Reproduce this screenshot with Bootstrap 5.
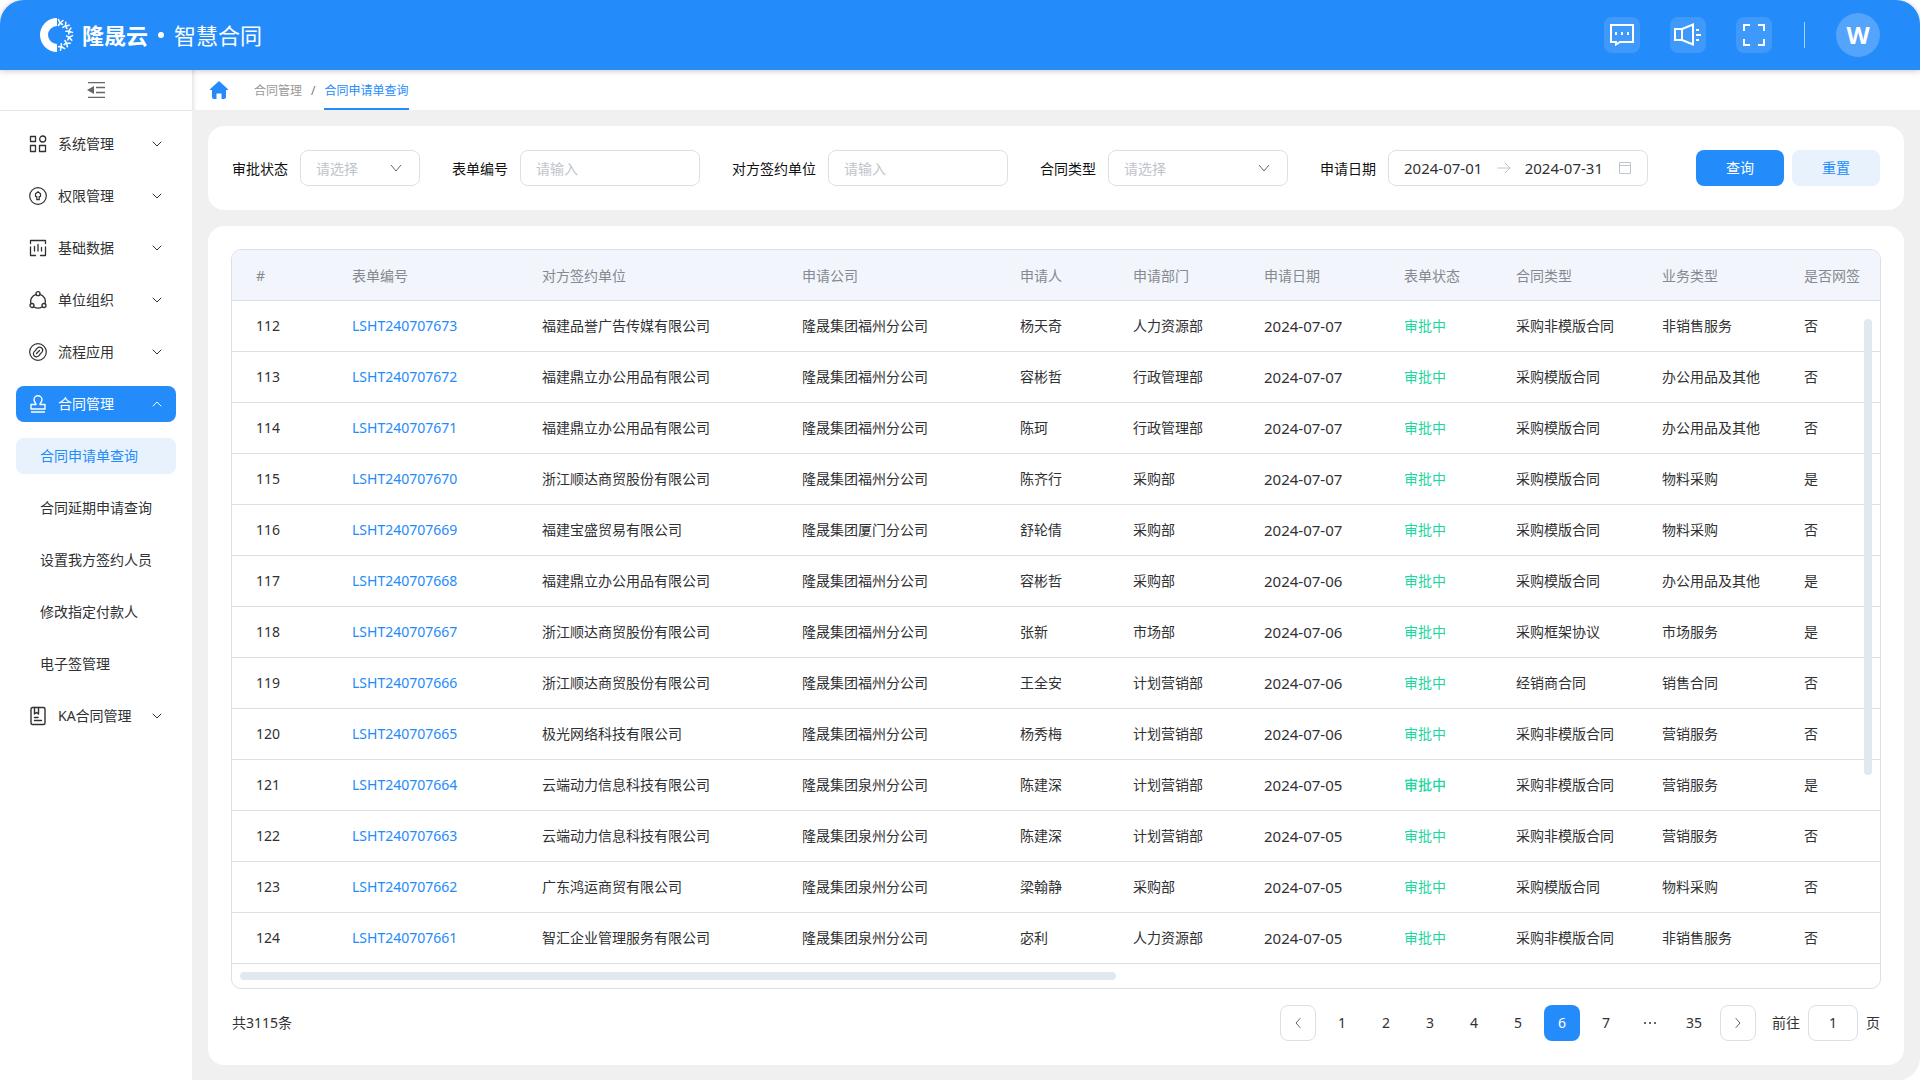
<!DOCTYPE html>
<html lang="zh-CN">
<head>
<meta charset="utf-8">
<meta name="viewport" content="width=device-width, initial-scale=1">
<title>隆晟云 · 智慧合同</title>
<link rel="stylesheet" href="https://cdn.jsdelivr.net/npm/bootstrap@5.3.0/dist/css/bootstrap.min.css">
<style>
:root{--brand:#248bfb;--brand-soft:#e8f2fd;--line:#dcdfe6;--ink:#303133;--hint:#c0c4cc}
body{font-family:"Noto Sans","Noto Sans CJK SC",sans-serif;font-size:14px;line-height:20px;color:var(--ink);background:#fff}
a{text-decoration:none}
svg{display:block;flex:none}
.ln{fill:none;stroke:currentColor;stroke-linecap:round;stroke-linejoin:round}
.topbar{height:70px;background:var(--brand);border-radius:24px 24px 0 0;padding:0 40px;color:#fff;box-shadow:0 1px 6px rgba(0,0,0,.22);z-index:3}
.brand-name{font-size:22px;line-height:32px;font-family:"Noto Sans CJK SC",sans-serif}
.brand-text{padding-bottom:2px}
.brand-dot{width:6px;height:6px;border-radius:50%;background:#fff;margin:0 10px}
.tools{gap:30px}
.tool-btn{width:36px;height:36px;border:0;border-radius:8px;background:rgba(255,255,255,.12);color:#fff;padding:0}
.tool-split{width:1px;height:26px;background:rgba(255,255,255,.6);margin:0 1px 0 2px}
.user-dot{width:44px;height:44px;border:0;border-radius:50%;background:rgba(255,255,255,.22);color:#fff;font:bold 24px/44px "Noto Sans",sans-serif;padding:0}
.side{width:192px;background:#fff}
.side-fold{height:41px;border:0;border-bottom:1px solid #e8e8e8;background:#fff;color:#666}
.menu{padding:15px 16px;gap:16px}
.menu-item{height:36px;border-radius:8px;padding:0 13px 0 12px;gap:10px;color:var(--ink)}
.menu-item.on{background:var(--brand);color:#fff}
.menu-sub{height:36px;border-radius:8px;padding-left:24px;color:var(--ink)}
.menu-sub.on{background:var(--brand-soft);color:var(--brand)}
.work{background:#f0f0f0;border-bottom-right-radius:24px;min-width:0}
.crumbs{height:40px;background:#fff;padding:0 17px;font-size:12px;line-height:42px;color:#999;box-shadow:inset 5px 0 5px -4px rgba(0,0,0,.14)}
.crumbs ol{margin:0 0 0 25px}
.crumbs li{height:40px}
.crumbs a{color:#999}
.crumbs .slash{margin:0 9px;color:#777}
.crumbs .here{color:var(--brand);border-bottom:2px solid var(--brand)}
.panel{background:#fff;border-radius:16px;padding:24px}
.filters{row-gap:12px;column-gap:32px}
.filters label{color:#111;margin-right:12px;padding-top:2px}
.box,.box:focus{height:36px;border:1px solid var(--line);border-radius:8px;font-size:14px;line-height:20px;padding:7px 15px;color:var(--ink);background-color:#fff}
.box::placeholder{color:var(--hint)}
.pick,.pick:focus{padding:8px 15px 6px;color:var(--hint);background-image:url("data:image/svg+xml,%3Csvg xmlns='http://www.w3.org/2000/svg' viewBox='0 0 12 12'%3E%3Cpath d='M1 3l5 6 5-6' fill='none' stroke='%23666'/%3E%3C/svg%3E");background-size:12px 12px;background-position:right 17px center}
.w-s{width:120px}.w-m{width:180px}.w-l{width:260px}
.date-in{width:80px;border:0;padding:0;font-size:15px;line-height:20px;color:var(--ink);outline:0}
.act{width:88px;height:36px;border:0;border-radius:8px;font-size:14px;line-height:20px;padding:0}
.act-go{background:var(--brand);color:#fff}
.act-re{background:var(--brand-soft);color:var(--brand)}
.list{margin:-1px -1px 0;border:1px solid var(--line);border-radius:10px;position:relative;overflow:hidden}
.grid{width:100%;min-width:1640px;table-layout:fixed;margin:0}
.grid th,.grid td{height:51px;padding:0 0 0 24px;border-bottom:1px solid var(--line);font-weight:400;white-space:nowrap}
.grid th{height:50px;padding-top:2px;background:#f2f6fc;color:#86898f}
.grid td a{color:var(--brand)}
.grid td:nth-child(8){color:#1ed6a0}
.grid td.strong{font-weight:500}
.grid .day{font-size:15px}
.bar-y{position:absolute;right:8px;top:69px;width:8px;height:456px;border-radius:4px;background:#e0e8f0}
.bar-x{width:876px;height:8px;border-radius:4px;background:#e0e8f0;margin:8px}
.foot{margin-top:16px}
.pager{gap:8px;margin:0}
.pager .page-link{width:36px;height:36px;border:0;border-radius:8px;padding:0;background:none;color:var(--ink);display:flex;align-items:center;justify-content:center;font-size:14px}
.pager .page-item:not(:first-child) .page-link{margin:0}
.pager .page-item .page-link{border-radius:8px}
.pager .edge .page-link{border:1px solid var(--line);color:#606266}
.pager .active .page-link{background:var(--brand);color:#fff}
.jump{gap:8px;margin-left:16px}
.jump input{width:50px;padding:0;text-align:center}
</style>
</head>
<body class="d-flex flex-column min-vh-100">
<header class="topbar d-flex align-items-center position-relative">
  <a href="#" class="d-flex align-items-center text-white brand-name">
    <svg class="me-2" width="34" height="34" viewBox="0 0 34 34"><path d="M17 0A17 17 0 0 0 17 34V26A9 9 0 0 1 17 8Z" fill="#fff"/><g class="ln" stroke-width="1.500"><g id="tick"><path d="M18.500 7.500l1.500-2.500 2.500 1.500M20 5l-1.500-3.500M20 5l3-2.500"/></g><use href="#tick" transform="rotate(29 17 17)"/><use href="#tick" transform="rotate(58 17 17)"/><use href="#tick" transform="rotate(87 17 17)"/><use href="#tick" transform="rotate(116 17 17)"/><use href="#tick" transform="rotate(145 17 17)"/></g></svg>
    <strong class="brand-text fw-bold">隆晟云</strong><span class="brand-dot"></span><span class="brand-text">智慧合同</span>
  </a>
  <div class="tools d-flex align-items-center ms-auto">
    <button class="tool-btn d-flex align-items-center justify-content-center" type="button" aria-label="消息"><svg width="24" height="22" viewBox="0 0 24 22"><path d="M1 1h22v17H10l-4 2.500V18H1z" fill="none" stroke="#fff" stroke-width="2"/><path d="M5 8h2v3H5zM11 8h2v3h-2zM17 8h2v3h-2z" fill="#fff"/></svg></button>
    <button class="tool-btn d-flex align-items-center justify-content-center" type="button" aria-label="公告"><svg width="28" height="24" viewBox="0 0 28 24"><path d="M1 6h7v11H1zM8 6l11-4.500v20L8 17M22 7h3M22 12h5M22 17h3" fill="none" stroke="#fff" stroke-width="2"/></svg></button>
    <button class="tool-btn d-flex align-items-center justify-content-center" type="button" aria-label="全屏"><svg width="24" height="24" viewBox="0 0 24 24"><path d="M2 8V2h6M16 2h6v6M22 16v6h-6M8 22H2v-6" fill="none" stroke="#fff" stroke-width="2"/></svg></button>
    <span class="tool-split"></span>
    <button class="user-dot" type="button">W</button>
  </div>
</header>
<div class="d-flex flex-grow-1">
  <aside class="side d-flex flex-column flex-shrink-0">
    <button class="side-fold d-flex align-items-center justify-content-center w-100" type="button" aria-label="收起菜单"><svg width="18" height="16" viewBox="0 0 18 16"><path d="M1 .5h17M9 5.500h9M9 10.500h9M1 15.500h17" stroke="currentColor" stroke-width="1.500"/><path d="M0 8l7-4v8z" fill="currentColor"/></svg></button>
    <nav class="menu d-flex flex-column">
      <a href="#" class="menu-item d-flex align-items-center"><svg class="ln" width="20" height="20" viewBox="0 0 20 20" stroke-width="1.300"><path d="M2.500 2.500h5v5h-5zM2.500 11.500h5v6h-5zM11.500 11.500h6v6h-6z"/><circle cx="14.700" cy="5" r="3"/></svg><span>系统管理</span><svg class="ln ms-auto" width="12" height="12" viewBox="0 0 12 12"><path d="M2 4l4 4 4-4"/></svg></a>
      <a href="#" class="menu-item d-flex align-items-center"><svg class="ln" width="20" height="20" viewBox="0 0 20 20" stroke-width="1.200"><circle cx="10" cy="10" r="8.300"/><path d="M8.800 10.500H7.500V7.800L10 5.800l2.500 2v2.700h-1.300v3.200H8.800z"/></svg><span>权限管理</span><svg class="ln ms-auto" width="12" height="12" viewBox="0 0 12 12"><path d="M2 4l4 4 4-4"/></svg></a>
      <a href="#" class="menu-item d-flex align-items-center"><svg class="ln" width="20" height="20" viewBox="0 0 20 20" stroke-width="1.300"><path d="M2.500 5.500v-3h15v3M2.500 9v8.500h5M17.500 9v8.500h-5M6.500 8.500V13M10 6.500V13M13.500 9.500V13"/></svg><span>基础数据</span><svg class="ln ms-auto" width="12" height="12" viewBox="0 0 12 12"><path d="M2 4l4 4 4-4"/></svg></a>
      <a href="#" class="menu-item d-flex align-items-center"><svg class="ln" width="20" height="20" viewBox="0 0 20 20" stroke-width="1.300"><circle cx="10" cy="3.700" r="2"/><circle cx="4" cy="15.500" r="2"/><circle cx="16" cy="15.500" r="2"/><path d="M8 4.300a7.500 7.500 0 0 0-5 9.300M12 4.300a7.500 7.500 0 0 1 5 9.300M6 17a8 8 0 0 0 8 0"/></svg><span>单位组织</span><svg class="ln ms-auto" width="12" height="12" viewBox="0 0 12 12"><path d="M2 4l4 4 4-4"/></svg></a>
      <a href="#" class="menu-item d-flex align-items-center"><svg class="ln" width="20" height="20" viewBox="0 0 20 20" stroke-width="1.200"><circle cx="10" cy="10" r="8.300"/><path d="M8 7.500l1.300-1.300a3 3 0 0 1 4.500 4.200L12 12M12 12.500l-1.300 1.300a3 3 0 0 1-4.500-4.200L8 8M8.500 11.500l3-3"/></svg><span>流程应用</span><svg class="ln ms-auto" width="12" height="12" viewBox="0 0 12 12"><path d="M2 4l4 4 4-4"/></svg></a>
      <a href="#" class="menu-item on d-flex align-items-center"><svg class="ln" width="20" height="20" viewBox="0 0 20 20" stroke-width="1.400"><path d="M8 10.500C8 9 6 8 6 5.800a4 4 0 0 1 8 0C14 8 12 9 12 10.500h5V15H3v-4.500zM3.500 18h13"/></svg><span>合同管理</span><svg class="ln ms-auto" width="12" height="12" viewBox="0 0 12 12"><path d="M2 8l4-4 4 4"/></svg></a>
      <a href="#" class="menu-sub on d-flex align-items-center">合同申请单查询</a>
      <a href="#" class="menu-sub d-flex align-items-center">合同延期申请查询</a>
      <a href="#" class="menu-sub d-flex align-items-center">设置我方签约人员</a>
      <a href="#" class="menu-sub d-flex align-items-center">修改指定付款人</a>
      <a href="#" class="menu-sub d-flex align-items-center">电子签管理</a>
      <a href="#" class="menu-item d-flex align-items-center"><svg class="ln" width="20" height="20" viewBox="0 0 20 20" stroke-width="1.400"><rect x="3" y="1.500" width="14" height="17" rx="1.500"/><path d="M6.500 1.500V8l2-1.500 2 1.500V1.500M6.500 11.500h3.500M6.500 14.500h7"/></svg><span>KA合同管理</span><svg class="ln ms-auto" width="12" height="12" viewBox="0 0 12 12"><path d="M2 4l4 4 4-4"/></svg></a>
    </nav>
  </aside>
  <main class="work flex-grow-1 d-flex flex-column">
    <nav class="crumbs d-flex align-items-center" aria-label="breadcrumb">
      <a href="#" aria-label="首页"><svg width="20" height="20" viewBox="0 0 20 20"><path d="M10 1l9 8.200a.5.500 0 0 1-.4.900H17V17a2 2 0 0 1-2 2h-2.500v-5.500h-5V19H5a2 2 0 0 1-2-2v-6.900H1.400a.5.500 0 0 1-.4-.9z" fill="#248bfb"/></svg></a>
      <ol class="list-unstyled d-flex align-items-center">
        <li><a href="#">合同管理</a></li><li class="slash">/</li><li class="here">合同申请单查询</li>
      </ol>
    </nav>
    <div class="p-3 d-flex flex-column gap-3 flex-grow-1">
      <form class="panel filters d-flex flex-wrap align-items-center">
        <div class="d-flex align-items-center"><label for="f1">审批状态</label><select id="f1" class="form-select box pick w-s"><option>请选择</option></select></div>
        <div class="d-flex align-items-center"><label for="f2">表单编号</label><input id="f2" class="form-control box w-m" placeholder="请输入"></div>
        <div class="d-flex align-items-center"><label for="f3">对方签约单位</label><input id="f3" class="form-control box w-m" placeholder="请输入"></div>
        <div class="d-flex align-items-center"><label for="f4">合同类型</label><select id="f4" class="form-select box pick w-m"><option>请选择</option></select></div>
        <div class="d-flex align-items-center"><label for="f5">申请日期</label>
          <div class="box w-l d-flex align-items-center justify-content-between">
            <input id="f5" class="date-in" value="2024-07-01"><svg class="ln" width="14" height="12" viewBox="0 0 14 12" color="#c0c4cc"><path d="M1 6h12M8 1l5 5-5 5"/></svg><input class="date-in" value="2024-07-31" aria-label="结束日期"><svg width="14" height="14" viewBox="0 0 14 14" fill="none" stroke="#c0c4cc"><path d="M1.500 1.500h11v11h-11zM1.500 4.500h11"/></svg>
          </div>
        </div>
        <div class="d-flex gap-2 ms-auto"><button class="act act-go" type="button">查询</button><button class="act act-re" type="reset">重置</button></div>
      </form>
      <section class="panel flex-grow-1">
        <div class="list">
          <table class="grid">
            <colgroup><col style="width:96px"><col style="width:190px"><col style="width:260px"><col style="width:218px"><col style="width:113px"><col style="width:131px"><col style="width:140px"><col style="width:112px"><col style="width:146px"><col style="width:142px"><col style="width:100px"></colgroup>
            <thead><tr><th>#</th><th>表单编号</th><th>对方签约单位</th><th>申请公司</th><th>申请人</th><th>申请部门</th><th>申请日期</th><th>表单状态</th><th>合同类型</th><th>业务类型</th><th>是否网签</th></tr></thead>
            <tbody>
            <tr><td>112</td><td><a href="#">LSHT240707673</a></td><td>福建品誉广告传媒有限公司</td><td>隆晟集团福州分公司</td><td>杨天奇</td><td>人力资源部</td><td class="day">2024-07-07</td><td>审批中</td><td>采购非模版合同</td><td>非销售服务</td><td>否</td></tr>
            <tr><td>113</td><td><a href="#">LSHT240707672</a></td><td>福建鼎立办公用品有限公司</td><td>隆晟集团福州分公司</td><td>容彬哲</td><td>行政管理部</td><td class="day">2024-07-07</td><td>审批中</td><td>采购模版合同</td><td>办公用品及其他</td><td>否</td></tr>
            <tr><td>114</td><td><a href="#">LSHT240707671</a></td><td>福建鼎立办公用品有限公司</td><td>隆晟集团福州分公司</td><td>陈珂</td><td>行政管理部</td><td class="day">2024-07-07</td><td>审批中</td><td>采购模版合同</td><td>办公用品及其他</td><td>否</td></tr>
            <tr><td>115</td><td><a href="#">LSHT240707670</a></td><td>浙江顺达商贸股份有限公司</td><td>隆晟集团福州分公司</td><td>陈齐行</td><td>采购部</td><td class="day">2024-07-07</td><td>审批中</td><td>采购模版合同</td><td>物料采购</td><td>是</td></tr>
            <tr><td>116</td><td><a href="#">LSHT240707669</a></td><td>福建宝盛贸易有限公司</td><td>隆晟集团厦门分公司</td><td>舒轮倩</td><td>采购部</td><td class="day">2024-07-07</td><td>审批中</td><td>采购模版合同</td><td>物料采购</td><td>否</td></tr>
            <tr><td>117</td><td><a href="#">LSHT240707668</a></td><td>福建鼎立办公用品有限公司</td><td>隆晟集团福州分公司</td><td>容彬哲</td><td>采购部</td><td class="day">2024-07-06</td><td>审批中</td><td>采购模版合同</td><td>办公用品及其他</td><td>是</td></tr>
            <tr><td>118</td><td><a href="#">LSHT240707667</a></td><td>浙江顺达商贸股份有限公司</td><td>隆晟集团福州分公司</td><td>张新</td><td>市场部</td><td class="day">2024-07-06</td><td>审批中</td><td>采购框架协议</td><td>市场服务</td><td>是</td></tr>
            <tr><td>119</td><td><a href="#">LSHT240707666</a></td><td>浙江顺达商贸股份有限公司</td><td>隆晟集团福州分公司</td><td>王全安</td><td>计划营销部</td><td class="day">2024-07-06</td><td>审批中</td><td>经销商合同</td><td>销售合同</td><td>否</td></tr>
            <tr><td>120</td><td><a href="#">LSHT240707665</a></td><td>极光网络科技有限公司</td><td>隆晟集团福州分公司</td><td>杨秀梅</td><td>计划营销部</td><td class="day">2024-07-06</td><td>审批中</td><td>采购非模版合同</td><td>营销服务</td><td>否</td></tr>
            <tr><td>121</td><td><a href="#">LSHT240707664</a></td><td>云端动力信息科技有限公司</td><td>隆晟集团泉州分公司</td><td>陈建深</td><td>计划营销部</td><td class="day">2024-07-05</td><td class="strong">审批中</td><td>采购非模版合同</td><td>营销服务</td><td>是</td></tr>
            <tr><td>122</td><td><a href="#">LSHT240707663</a></td><td>云端动力信息科技有限公司</td><td>隆晟集团泉州分公司</td><td>陈建深</td><td>计划营销部</td><td class="day">2024-07-05</td><td>审批中</td><td>采购非模版合同</td><td>营销服务</td><td>否</td></tr>
            <tr><td>123</td><td><a href="#">LSHT240707662</a></td><td>广东鸿运商贸有限公司</td><td>隆晟集团泉州分公司</td><td>梁翰静</td><td>采购部</td><td class="day">2024-07-05</td><td>审批中</td><td>采购模版合同</td><td>物料采购</td><td>否</td></tr>
            <tr><td>124</td><td><a href="#">LSHT240707661</a></td><td>智汇企业管理服务有限公司</td><td>隆晟集团泉州分公司</td><td>宓利</td><td>人力资源部</td><td class="day">2024-07-05</td><td>审批中</td><td>采购非模版合同</td><td>非销售服务</td><td>否</td></tr>
            </tbody>
          </table>
          <div class="bar-y"></div>
          <div class="bar-x"></div>
        </div>
        <div class="foot d-flex align-items-center">
          <span>共3115条</span>
          <ul class="pagination pager ms-auto">
            <li class="page-item edge"><a class="page-link" href="#" aria-label="上一页"><svg class="ln" width="12" height="12" viewBox="0 0 12 12"><path d="M8 1.500L4 6l4 4.500"/></svg></a></li>
            <li class="page-item"><a class="page-link" href="#">1</a></li>
            <li class="page-item"><a class="page-link" href="#">2</a></li>
            <li class="page-item"><a class="page-link" href="#">3</a></li>
            <li class="page-item"><a class="page-link" href="#">4</a></li>
            <li class="page-item"><a class="page-link" href="#">5</a></li>
            <li class="page-item active"><a class="page-link" href="#">6</a></li>
            <li class="page-item"><a class="page-link" href="#">7</a></li>
            <li class="page-item"><a class="page-link" href="#" aria-label="更多页"><svg width="14" height="4" viewBox="0 0 14 4" fill="currentColor"><circle cx="2" cy="2" r="1"/><circle cx="7" cy="2" r="1"/><circle cx="12" cy="2" r="1"/></svg></a></li>
            <li class="page-item"><a class="page-link" href="#">35</a></li>
            <li class="page-item edge"><a class="page-link" href="#" aria-label="下一页"><svg class="ln" width="12" height="12" viewBox="0 0 12 12"><path d="M4 1.500L8 6l-4 4.500"/></svg></a></li>
          </ul>
          <div class="jump d-flex align-items-center"><label for="go">前往</label><input id="go" class="box" value="1"><span>页</span></div>
        </div>
      </section>
    </div>
  </main>
</div>
<script src="https://cdn.jsdelivr.net/npm/bootstrap@5.3.0/dist/js/bootstrap.bundle.min.js"></script>
</body>
</html>
